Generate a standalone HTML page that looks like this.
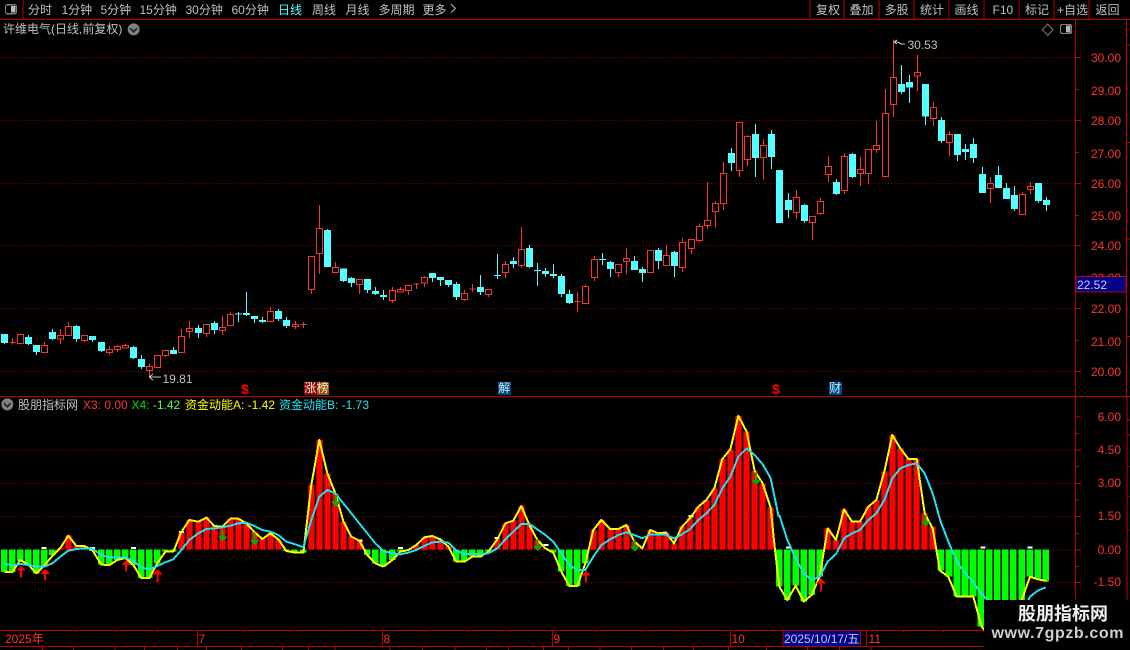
<!DOCTYPE html>
<html lang="zh">
<head>
<meta charset="utf-8">
<title>股朋指标网</title>
<style>
html,body{margin:0;padding:0;background:#000;width:1130px;height:650px;overflow:hidden}
body{position:relative;font-family:"Liberation Sans","WenQuanYi Zen Hei","Noto Sans CJK SC",sans-serif;font-size:12px;color:#c0c0c0}
svg{position:absolute;left:0;top:0}
span{position:absolute;white-space:nowrap;line-height:14px;font-size:12px}
.m{top:2.5px}
.t{top:2.5px}
.a{right:9px;color:#ff3232;text-align:right}
.d{top:631.5px;color:#ff3232}
.tag{top:382px;height:13px;line-height:13px;width:12.5px;text-align:center;color:#ffe8d0}
</style>
</head>
<body>
<svg width="1130" height="650" viewBox="0 0 3390 1950" fill="none" shape-rendering="crispEdges">
<!-- dotted grid -->
<path stroke="#8c0000" stroke-width="3" stroke-dasharray="3 6" d="M0 172.5H3225M0 361.5H3225M0 550.5H3225M0 736.5H3225M0 925.5H3225M0 1114.5H3225M0 1349.5H3225M0 1450.5H3225M0 1549.5H3225M0 1650.5H3225M0 1747.5H3225"/>
<!-- frame -->
<path stroke="#c00000" stroke-width="3" d="M0 58.5H3390M0 1190H3390M69 0V58M2430.5 0V58M2532.5 0V58M2637.5 0V58M2742.5 0V58M2847 0V58M2952 0V58M3057.5 0V58M3162.5 0V58M3267.5 0V58M3226.5 58V1800M3379 58V1190M3381 1190V1800
M3228 172.5H3243M3228 361.5H3243M3228 550.5H3243M3228 736.5H3243M3228 925.5H3243M3228 1114.5H3243M3228 268.5H3237M3228 457.5H3237M3228 646.5H3237M3228 832.5H3237M3228 1021.5H3237
M3228 1250.5H3243M3228 1349.5H3243M3228 1450.5H3243M3228 1549.5H3243M3228 1650.5H3243M3228 1747.5H3243M3228 1300H3237M3228 1400H3237M3228 1500H3237M3228 1600H3237M3228 1700H3237
M3380 135H3390M3380 427H3390M3380 717H3390M3380 1010H3390M3380 90H3386M3380 105H3386M3380 175H3386M3380 265H3386M3380 345H3386M3380 405H3386M3380 475H3386M3380 575H3386M3380 635H3386M3380 665H3386M3380 810H3386M3380 855H3386M3380 925H3386M3380 1100H3386M3382 1260H3390M3382 1305H3390M3382 1400H3388M3382 1490H3388M3382 1590H3388
M0 1891H3220M0 1939H3220M592 1891V1939M1147 1891V1939M1657 1891V1939M2191 1891V1939M2600 1891V1939
M228 1891V1898M348 1891V1898M472 1891V1898M730 1891V1898M870 1891V1898M1008 1891V1898M1276 1891V1898M1402 1891V1898M1532 1891V1898M1790 1891V1898M1924 1891V1898M2060 1891V1898M2710 1891V1898M2830 1891V1898M2950 1891V1898M3070 1891V1898
M127 1939V1950M220 1939V1950M345 1939V1950M433 1939V1950M533 1939V1950M620 1939V1950M725 1939V1950M848 1939V1950M925 1939V1950M1005 1939V1950M1170 1939V1950M1268 1939V1950M1365 1939V1950M1460 1939V1950M1525 1939V1950M1630 1939V1950M1705 1939V1950M1800 1939V1950M1895 1939V1950M1990 1939V1950M2080 1939V1950M2185 1939V1950M2300 1939V1950M2423 1939V1950M2518 1939V1950M2613 1939V1950"/>
<!-- candles -->
<g transform="translate(0,600)">
<path stroke="#ff3232" stroke-width="3" d="M37 414V434M61 403V434M133 426V458M181 387V432M205 366V407M253 406V426M328 438V465M352 435V456M376 432V445M448 490V528M496 451V471M544 387V458M568 363V414M619 373V411M667 348V405M691 336V377M811 321V365M886 363V387M910 366V384M934 169V282M958 15V222M1006 186V218M1078 238V282"/>
<path stroke="#ff3232" stroke-width="3" fill="#000" d="M28 428h18M52 404h18V430h-18zM124 437h18V457h-18zM172 407h18V417h-18zM196 379h18V406h-18zM244 407h18V421h-18zM319 449h18V457h-18zM343 440h18V449h-18zM367 437h18V444h-18zM439 500h18V511h-18zM463 467h18V502h-18zM487 452h18V466h-18zM535 410h18V457h-18zM559 386h18V394h-18zM610 374h18V400h-18zM658 383h18V391h-18zM682 344h18V376h-18zM802 335h18V364h-18zM877 374h18V380h-18zM901 373h18M925 170h18V268h-18zM949 86h18V160h-18zM997 203h18V217h-18zM1069 239h18V253h-18z"/>
<path stroke="#54ffff" stroke-width="3" d="M13 402V432M85 405V435M109 435V465M157 387V420M229 375V426M277 408V426M304 426V456M400 438V477M424 465V507M520 441V462M595 375V414M643 363V402M715 336V366M739 276V348M763 348V369M787 351V369M835 327V363M859 351V384M982 87V201M1030 205V246M1054 231V261M1102 237V279M1126 261V285"/>
<path stroke="#54ffff" stroke-width="21" d="M13 402V429M85 411V432M109 435V456M157 396V417M229 378V417M277 408V420M304 426V453M400 441V474M424 477V501M520 450V462M595 384V399M643 369V390M715 341V344M739 339V345M763 348V357M787 360V366M835 333V357M859 360V378M982 90V201M1030 205V243M1054 234V249M1102 237V270M1126 273V282"/>
</g>
<g transform="translate(1140,600)">
<path stroke="#ff3232" stroke-width="3" d="M37 261V309M61 261V277M85 256V285M109 249V267M133 228V261M253 270V303M277 252V276M325 268V291M376 183V234M424 81V204M592 276V336M616 255V311M643 168V243M715 193V231M739 144V222M811 151V218M859 135V197"/>
<path stroke="#ff3232" stroke-width="3" fill="#000" d="M28 272h18V301h-18zM52 269h18V276h-18zM76 257h18V271h-18zM100 252h18M124 233h18V249h-18zM244 281h18V298h-18zM268 267h18M316 269h18V283h-18zM367 194h18V217h-18zM415 149h18V196h-18zM583 304h18M607 260h18V310h-18zM634 179h18V232h-18zM706 194h18V217h-18zM730 176h18V184h-18zM802 152h18V217h-18zM850 167h18V196h-18z"/>
<path stroke="#54ffff" stroke-width="3" d="M10 270V300M157 219V246M181 231V258M205 240V261M229 246V300M301 225V285M352 162V237M400 171V204M448 135V204M472 189V258M496 204V231M520 192V234M544 222V291M568 270V312M667 159V195M691 183V231M763 168V210M787 201V246M835 144V207M883 153V231"/>
<path stroke="#54ffff" stroke-width="21" d="M10 285V291M157 219V234M181 231V240M205 240V255M229 252V291M301 261V276M352 225V228M400 183V192M448 144V201M472 210V213M496 213V222M520 222V228M544 228V282M568 282V309M667 177V180M691 186V207M763 183V210M787 207V219M835 150V183M883 156V198"/>
</g>
<g transform="translate(2040,300)">
<path stroke="#ff3232" stroke-width="3" d="M7 414V516M34 418V462M58 370V428M82 246V387M106 303V384M130 186V330M178 67V231M202 105V198M250 117V240M349 270V357M397 349V420M421 294V345M445 168V246M493 159V282M541 171V258M565 148V252M589 63V159M616 -33V233M640 -182V51M712 -135V-27M760 6V78M808 93V168M931 231V309M1027 276V344M1051 246V282"/>
<path stroke="#ff3232" stroke-width="3" fill="#000" d="M-2 428h18V502h-18zM25 419h18V445h-18zM49 380h18V421h-18zM73 362h18V376h-18zM97 311h18V334h-18zM121 221h18V310h-18zM169 68h18V211h-18zM193 110h18V178h-18zM241 137h18V172h-18zM340 293h18V337h-18zM388 350h18V367h-18zM412 305h18V341h-18zM436 200h18V223h-18zM484 170h18V271h-18zM532 209h18V220h-18zM556 149h18V220h-18zM580 137h18V148h-18zM607 41h18V230h-18zM631 -67h18V13h-18zM703 -82h18V-72h-18zM751 23h18V55h-18zM799 104h18V127h-18zM922 251h18V265h-18zM1018 284h18V343h-18zM1042 260h18V268h-18z"/>
<path stroke="#54ffff" stroke-width="3" d="M154 144V213M226 72V231M274 90V207M325 279V354M373 312V369M469 237V285M517 159V234M664 -105V-18M688 -75V9M736 -48V75M784 51V129M832 102V183M856 132V180M880 114V189M907 201V279M955 198V264M979 249V297M1003 258V333M1075 249V309M1099 291V333"/>
<path stroke="#54ffff" stroke-width="21" d="M154 159V189M226 102V174M274 102V171M298 210V369M325 300V330M373 315V363M469 246V282M517 162V231M664 -48V-24M688 -54V-37M736 -48V50M784 60V123M832 102V165M856 147V156M880 132V174M907 222V279M955 225V264M979 264V297M1003 285V327M1075 249V303M1099 300V315"/>
</g>
<!-- markers on candles -->
<path stroke="#c0c0c0" stroke-width="3" d="M2682 126l9-6M2682 126l9 6M2682 126h12l9 6h12M447 1131h36M447 1131l12-9M447 1131l12 9"/>
<!-- histogram -->
<defs>
<g id="rb">
<path transform="translate(0,1500)" d="M181 149V144M205 149V107M229 149V138M253 149V138M544 149V96M568 149V60M595 149V65M619 149V53M643 149V78M667 149V80M691 149V56M715 149V56M739 149V70M763 149V96M787 149V117M811 149V100M835 149V118M934 149V-45M958 149V-180M982 149V-80M1006 149V-20M1030 149V64M1054 149V110M1078 149V122"/>
<path transform="translate(1140,1500)" d="M109 149V135M133 149V112M157 149V108M181 149V118M205 149V140M352 149V118M376 149V70M400 149V62M424 149V18M448 149V75M472 149V120M496 149V145M640 149V90M664 149V60M691 149V87M715 149V87M739 149V75M763 149V125M787 149V145M811 149V90M835 149V100"/>
<path transform="translate(1980,1215)" d="M18 434V383M42 434V415M66 434V365M90 434V340M115 434V305M139 434V285M163 434V250M187 434V162M211 434V133M235 434V33M260 434V80M284 434V198M308 434V235M332 434V308"/>
<path transform="translate(2280,1200)" d="M203 449V385M228 449V420M252 449V328M276 449V365M300 449V365M325 449V320M349 449V300M373 449V215M397 449V105M421 449V145M445 449V177M470 449V177M494 449V340M518 449V380"/>
</g>
</defs>
<use href="#rb" stroke="#a80000" stroke-width="21"/>
<use href="#rb" stroke="#ff0000" stroke-width="15"/>
<g stroke="#00ff00" stroke-width="20">
<path transform="translate(0,1500)" d="M13 149V216M37 149V216M61 149V183M85 149V194M109 149V220M133 149V196M157 149V165M277 149V153M304 149V194M328 149V195M352 149V180M376 149V174M400 149V195M424 149V234M448 149V234M472 149V190M496 149V155M520 149V155M859 149V153M883 149V158M910 149V158M1102 149V165M1126 149V190"/>
<path transform="translate(1140,1500)" d="M10 149V200M37 149V180M61 149V155M85 149V150M229 149V185M253 149V185M277 149V170M301 149V170M325 149V155M520 149V158M544 149V215M568 149V258M592 149V258M616 149V190"/>
<path transform="translate(2280,1200)" d="M58 449V560M82 449V600M107 449V557M131 449V605M155 449V585M179 449V530M542 449V512M567 449V530M591 449V590M615 449V590M639 449V590M663 449V680M688 449V600M712 449V600M736 449V600M760 449V600M785 449V600M809 449V530M833 449V538M857 449V545"/>
</g>
<!-- white caps -->
<g stroke="#ffffff" stroke-width="6">
<path transform="translate(0,1500)" d="M125 144h15M270 144h15M393 144h15M537 96h15M658 80h15M1073 122h15"/>
<path transform="translate(1140,1500)" d="M54 144h15M343 114h15M490 135h15M925 48h15"/>
<path transform="translate(2280,1200)" d="M78 442h15M661 442h15M803 442h15"/>
<path transform="translate(1980,1215)" d="M85 335h15"/>
</g>
<!-- yellow line -->
<g stroke="#ffff00" stroke-width="6" stroke-linejoin="round">
<polyline transform="translate(0,1500)" points="13,216 37,216 61,180 85,194 109,220 133,196 157,168 181,144 205,107 229,138 253,138 277,150 304,194 328,195 352,180 376,174 400,195 424,234 448,234 472,190 496,155 520,155 544,96 568,60 595,65 619,53 643,78 667,80 691,56 715,56 739,70 763,96 787,117 811,100 835,118 859,153 886,158 910,158 934,-45 958,-180 982,-80 1006,-20 1030,64 1054,110 1078,122 1102,165 1126,190 1150,200"/>
<polyline transform="translate(1140,1500)" points="10,200 37,180 61,155 85,150 109,135 133,112 157,108 181,118 205,140 229,185 253,185 277,170 301,170 325,155 352,118 376,70 400,62 424,18 448,75 472,120 496,145 520,158 544,215 568,258 592,258 616,190 640,90 664,60 691,87 715,87 739,75 763,125 787,145 811,90 835,100 859,97"/>
<polyline transform="translate(1980,1215)" points="18,383 42,415 66,365 90,340 115,305 139,285 163,250 187,162 211,133 235,33 260,80 284,198 308,235 332,308"/>
<polyline transform="translate(2280,1200)" points="32,323 45,450 58,560 82,600 107,557 131,605 155,585 179,530 203,385 228,420 252,328 276,365 300,365 325,320 349,300 373,215 397,105 421,145 445,177 470,177 494,340 518,385 540,512 565,530 590,590 640,590 665,680 700,720 760,720 785,600 810,530 833,538 860,543"/>
</g>
<!-- cyan line -->
<g stroke="#22dff0" stroke-width="6" stroke-linejoin="round">
<polyline transform="translate(0,1500)" points="13,190 37,197 61,192 85,195 109,200 133,200 157,190 181,170 205,152 229,147 253,145 277,146 304,165 328,173 352,173 376,173 400,182 424,203 448,208 472,198 496,187 520,178 544,150 568,120 595,100 619,87 643,85 667,82 691,77 715,70 739,68 763,78 787,90 811,95 835,105 859,125 886,133 910,142 934,60 958,-10 982,-30 1006,-20 1030,10 1054,40 1078,70 1102,100 1126,130 1150,153"/>
<polyline transform="translate(1140,1500)" points="10,153 37,160 61,163 85,158 109,150 133,138 157,127 181,125 205,128 229,152 253,162 277,162 301,163 325,160 352,145 376,118 400,95 424,72 448,72 472,88 496,105 520,125 544,160 568,195 592,210 616,210 640,170 664,135 691,118 715,105 739,97 763,105 787,115 811,103 835,103 859,103"/>
<polyline transform="translate(1980,1215)" points="18,390 42,400 66,388 90,372 115,345 139,325 163,300 187,250 211,215 235,155 260,130 284,150 308,178 332,220 356,335"/>
<polyline transform="translate(2280,1200)" points="58,345 82,420 107,475 131,520 155,540 179,530 203,485 228,462 252,415 276,400 300,390 325,360 349,340 373,300 397,235 421,205 445,195 470,190 494,220 518,280 542,365 567,430 591,485 615,520 639,545 663,580 688,605 740,660 785,640 810,590 833,572 857,562"/>
</g>
<!-- arrows -->
<g fill="#ff0000">
<path transform="translate(0,1500)" d="M63 197l15 15h-30zM60 212h6V233h-6zM135 207l15 15h-30zM132 222h6V242h-6zM378 180l15 15h-30zM375 195h6V215h-6zM473 208l15 15h-30zM470 223h6V246h-6z"/>
<path transform="translate(1140,1500)" d="M618 212l15 15h-30zM615 227h6V248h-6z"/>
<path transform="translate(2280,1200)" d="M183 535l15 15h-30zM180 550h6V575h-6z"/>
</g>
<g fill="#00b000">
<path transform="translate(0,1500)" d="M668 125l15-15h-30zM665 90h6V110h-6zM764 135l15-15h-30zM761 98h6V120h-6zM1008 20l15-15h-30zM1005 -15h6V5h-6z"/>
<path transform="translate(1140,1500)" d="M473 153l15-15h-30zM470 118h6V138h-6zM764 155l15-15h-30zM761 118h6V140h-6z"/>
<path transform="translate(2280,1200)" d="M497 380l15-15h-30zM494 345h6V365h-6z"/>
<path transform="translate(1980,1215)" d="M288 240l15-15h-30zM285 203h6V225h-6z"/>
</g>
<!-- date box, price box, watermark bg -->
<rect x="2349" y="1891" width="233" height="48" fill="#000088" stroke="#c00000" stroke-width="3"/>
<rect x="3228" y="830" width="150" height="46" fill="#000088" stroke="#c00000" stroke-width="3"/>
<rect x="2952" y="1800" width="438" height="150" fill="#000"/>
<!-- icons -->
<rect x="16.5" y="14.5" width="33" height="27" rx="6" fill="#000" stroke="#808080" stroke-width="4"/>
<rect x="33" y="18" width="13" height="20" fill="#b8b8b8"/>
<rect x="3181.5" y="73.5" width="33" height="27" rx="6" fill="#000" stroke="#808080" stroke-width="4"/>
<rect x="3198" y="77" width="13" height="20" fill="#b8b8b8"/>
<path stroke="#808080" stroke-width="3" d="M3143 72l16 17-16 17-16-17z" shape-rendering="auto"/>
<path stroke="#c0c0c0" stroke-width="3" d="M1353 12l13 13-13 13" shape-rendering="auto"/>
<g shape-rendering="auto">
<circle cx="401" cy="88" r="18" fill="#808080"/>
<path stroke="#222" stroke-width="5" d="M391 85l10 10 10-10"/>
<circle cx="22" cy="1213" r="18" fill="#808080"/>
<path stroke="#222" stroke-width="5" d="M12 1210l10 10 10-10"/>
</g>
</svg>

<!-- top menu -->
<span class="m" style="left:28px">分时</span>
<span class="m" style="left:61.5px">1分钟</span>
<span class="m" style="left:100.5px">5分钟</span>
<span class="m" style="left:139.5px">15分钟</span>
<span class="m" style="left:185.5px">30分钟</span>
<span class="m" style="left:231.5px">60分钟</span>
<span class="m" style="left:278px;color:#54ffff">日线</span>
<span class="m" style="left:312px">周线</span>
<span class="m" style="left:345.5px">月线</span>
<span class="m" style="left:378.5px">多周期</span>
<span class="m" style="left:422.5px">更多</span>
<span class="t" style="left:816px">复权</span>
<span class="t" style="left:849.5px">叠加</span>
<span class="t" style="left:884.5px">多股</span>
<span class="t" style="left:920px">统计</span>
<span class="t" style="left:954.5px">画线</span>
<span class="t" style="left:992.5px">F10</span>
<span class="t" style="left:1025px">标记</span>
<span class="t" style="left:1057px">+自选</span>
<span class="t" style="left:1095.5px">返回</span>
<span style="left:3px;top:22px">许维电气(日线,前复权)</span>

<!-- price axis -->
<span class="a" style="top:50.5px">30.00</span>
<span class="a" style="top:83.5px">29.00</span>
<span class="a" style="top:113.5px">28.00</span>
<span class="a" style="top:146.5px">27.00</span>
<span class="a" style="top:176.5px">26.00</span>
<span class="a" style="top:208.5px">25.00</span>
<span class="a" style="top:239px">24.00</span>
<span class="a" style="top:271px;height:6px;overflow:hidden">23.00</span>
<span style="left:1077px;top:277.5px;width:49px;height:14px;color:#d0d0ff;overflow:hidden">22.52</span>
<span class="a" style="top:301.5px">22.00</span>
<span class="a" style="top:334.5px">21.00</span>
<span class="a" style="top:364.5px">20.00</span>
<span class="a" style="top:410px">6.00</span>
<span class="a" style="top:443px">4.50</span>
<span class="a" style="top:476px">3.00</span>
<span class="a" style="top:509px">1.50</span>
<span class="a" style="top:542.5px">0.00</span>
<span class="a" style="top:575px">-1.50</span>

<!-- chart marks -->
<span style="left:907.5px;top:38px">30.53</span>
<span style="left:162.5px;top:372px">19.81</span>
<span style="left:241px;top:382px;color:#f00;font-weight:bold;font-size:14px">$</span>
<span style="left:772px;top:382px;color:#f00;font-weight:bold;font-size:14px">$</span>
<span class="tag" style="left:304px;background:#8a0a0a">涨</span>
<span class="tag" style="left:316.5px;background:#8a5010">榜</span>
<span class="tag" style="left:498px;background:#004a80;color:#bfefff">解</span>
<span class="tag" style="left:829px;background:#004a80;color:#bfefff">财</span>

<!-- indicator legend -->
<span style="left:18px;top:397.5px">股朋指标网</span>
<span style="left:83px;top:397.5px;color:#ff3232">X3: 0.00</span>
<span style="left:131.5px;top:397.5px;color:#00e000">X4: <i style="font-style:normal;color:#54ff54">-1.42</i></span>
<span style="left:185px;top:397.5px;color:#ffff00">资金动能A: -1.42</span>
<span style="left:279px;top:397.5px;color:#22e6f2">资金动能B: -1.73</span>

<!-- date axis -->
<span class="d" style="left:5px">2025年</span>
<span class="d" style="left:198.5px">7</span>
<span class="d" style="left:383.5px">8</span>
<span class="d" style="left:553.5px">9</span>
<span class="d" style="left:731.5px">10</span>
<span class="d" style="left:784px;color:#c8c8e8">2025/10/17/五</span>
<span class="d" style="left:868.5px">11</span>

<!-- watermark -->
<span style="left:1018px;top:604px;line-height:20px;font-size:18px;font-weight:bold;color:#f0f0f0">股朋指标网</span>
<span style="left:991.5px;top:625px;line-height:18px;font-size:16px;font-weight:bold;letter-spacing:.6px;color:#d0d0d0">www.7gpzb.com</span>
</body>
</html>
